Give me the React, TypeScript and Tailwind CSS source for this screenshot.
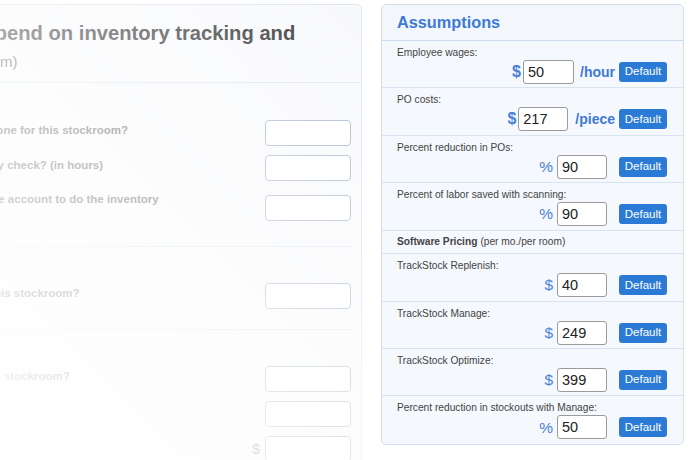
import React from "react";

const Sym = ({ c, bold = true }: { c: string; bold?: boolean }) =>
  bold ? (
    <span className="text-[16px] font-bold leading-none text-[#4a80d6] mr-[2px]">{c}</span>
  ) : (
    <span className="text-[15.5px] leading-none text-[#4a80d6] mr-[4px]">{c}</span>
  );

const RInput = ({ v, w }: { v: string; w: string }) => (
  <input
    readOnly
    value={v}
    className={`${w} h-[24px] border border-[#9b9b9b] rounded-[3px] bg-white pl-[4px] text-[14.5px] text-[#222] outline-none`}
  />
);

const DefaultBtn = ({ ml }: { ml: string }) => (
  <div
    className={`${ml} w-[48px] h-[20px] rounded-[3px] bg-[#2b7bd6] text-white text-[11.5px] flex items-center justify-center`}
  >
    Default
  </div>
);

const Row = ({ label, children, last = false }: { label: string; children: React.ReactNode; last?: boolean }) => (
  <div
    className={`h-[47.4px] ${last ? "" : "border-b border-[#d9e4f1]"} pt-[5px] pl-[15px] pr-[16px] flex flex-col`}
  >
    <div className="text-[10.2px] leading-[13px] text-[#444]">{label}</div>
    <div className="mt-[1px] flex items-center justify-end h-[24px]">{children}</div>
  </div>
);

const PctRow = ({ label, v, sym, last = false }: { label: string; v: string; sym: "%" | "$"; last?: boolean }) => (
  <Row label={label} last={last}>
    <Sym c={sym} bold={false} />
    <RInput v={v} w="w-[50px]" />
    <DefaultBtn ml="ml-[12px]" />
  </Row>
);

const LInput = () => (
  <div className="shrink-0 w-[86px] h-[26px] border border-[#a9b6c9] rounded-[4px] bg-white" />
);

const lbl = "pt-[3px] text-[11.5px] font-bold leading-[14px] text-[#555] whitespace-nowrap";

export default function App() {
  return (
    <div className="w-[690px] h-[460px] overflow-hidden relative bg-white flex items-start font-['Liberation_Sans',Arial,sans-serif]">
      {/* Left panel */}
      <div className="shrink-0 w-[578px] ml-[-216px] mt-[4px] h-[480px] border border-[#dde4ee] rounded-[5px] bg-[#f8f9fb]">
        <div className="h-[78px] border-b border-[#dde5ef] pl-[19px] pt-[16px] whitespace-nowrap">
          <div className="text-[20.2px] font-bold leading-[24px] text-[#333]">
            How much do you spend on inventory tracking and
          </div>
          <div className="mt-[8px] text-[15px] leading-[18px] text-[#555]">stockouts? (avg. per stockroom)</div>
        </div>
        <div className="pl-[19px] pr-[10px]">
          <div className="pt-[37px] pb-[21px] border-b border-[#dfe6ef]">
            <div className="flex justify-between items-start h-[26px]">
              <div className={`${lbl} ml-[-7px]`}>How often is a full inventory check done for this stockroom?</div>
              <LInput />
            </div>
            <div className="mt-[9px] flex justify-between items-start h-[26px]">
              <div className={lbl}>How long does one typical inventory check? (in hours)</div>
              <LInput />
            </div>
            <div className="mt-[10px] flex justify-between items-center h-[34px]">
              <div className="text-[11.5px] font-bold leading-[17px] text-[#555] whitespace-nowrap">
                How many employees must you take account to do the inventory
                <br />
                check?
              </div>
              <LInput />
            </div>
          </div>
          <div className="pt-[36px] pb-[20px] border-b border-[#dfe6ef]">
            <div className="flex justify-between items-start h-[26px]">
              <div className={`${lbl} ml-[-3px]`}>How many stockouts happened in this stockroom?</div>
              <LInput />
            </div>
          </div>
          <div className="pt-[36px]">
            <div className="flex justify-between items-start h-[26px]">
              <div className={lbl}>What does one stockout cost in this stockroom?</div>
              <LInput />
            </div>
            <div className="mt-[9px] flex justify-end items-start h-[26px]">
              <LInput />
            </div>
            <div className="mt-[9px] flex justify-end items-center h-[26px]">
              <span className="text-[15px] text-[#888] mr-[5px]">$</span>
              <LInput />
            </div>
          </div>
        </div>
      </div>

      {/* Fade overlay over the left panel */}
      <div className="absolute left-0 top-0 w-[372px] h-[460px] pointer-events-none bg-[linear-gradient(45deg,rgba(255,255,255,1)_0%,rgba(255,255,255,0.6)_50%,rgba(255,255,255,0)_100%)]" />

      {/* Right panel */}
      <div className="shrink-0 ml-[19px] mt-[4px] w-[303px] border border-[#d3dfee] rounded-[5px] bg-[#f5f8fd] overflow-hidden">
        <div className="h-[36px] border-b border-[#cbdaee] bg-[#f3f7fc] pl-[15px] flex items-center">
          <span className="text-[16.3px] font-bold text-[#3d7ad6]">Assumptions</span>
        </div>
        <Row label="Employee wages:">
          <Sym c="$" />
          <RInput v="50" w="w-[51px]" />
          <span className="ml-[6px] text-[14px] font-bold text-[#3f78d4]">/hour</span>
          <DefaultBtn ml="ml-[4px]" />
        </Row>
        <Row label="PO costs:">
          <Sym c="$" />
          <RInput v="217" w="w-[50px]" />
          <span className="ml-[7px] text-[14px] font-bold text-[#3f78d4]">/piece</span>
          <DefaultBtn ml="ml-[4px]" />
        </Row>
        <PctRow label="Percent reduction in POs:" v="90" sym="%" />
        <PctRow label="Percent of labor saved with scanning:" v="90" sym="%" />
        <div className="h-[23.6px] border-b border-[#d9e4f1] pl-[15px] flex items-center text-[10.2px] text-[#444]">
          <span className="font-bold">Software Pricing</span>
          <span className="ml-[3px]">(per mo./per room)</span>
        </div>
        <PctRow label="TrackStock Replenish:" v="40" sym="$" />
        <PctRow label="TrackStock Manage:" v="249" sym="$" />
        <PctRow label="TrackStock Optimize:" v="399" sym="$" />
        <PctRow label="Percent reduction in stockouts with Manage:" v="50" sym="%" last />
      </div>
    </div>
  );
}
